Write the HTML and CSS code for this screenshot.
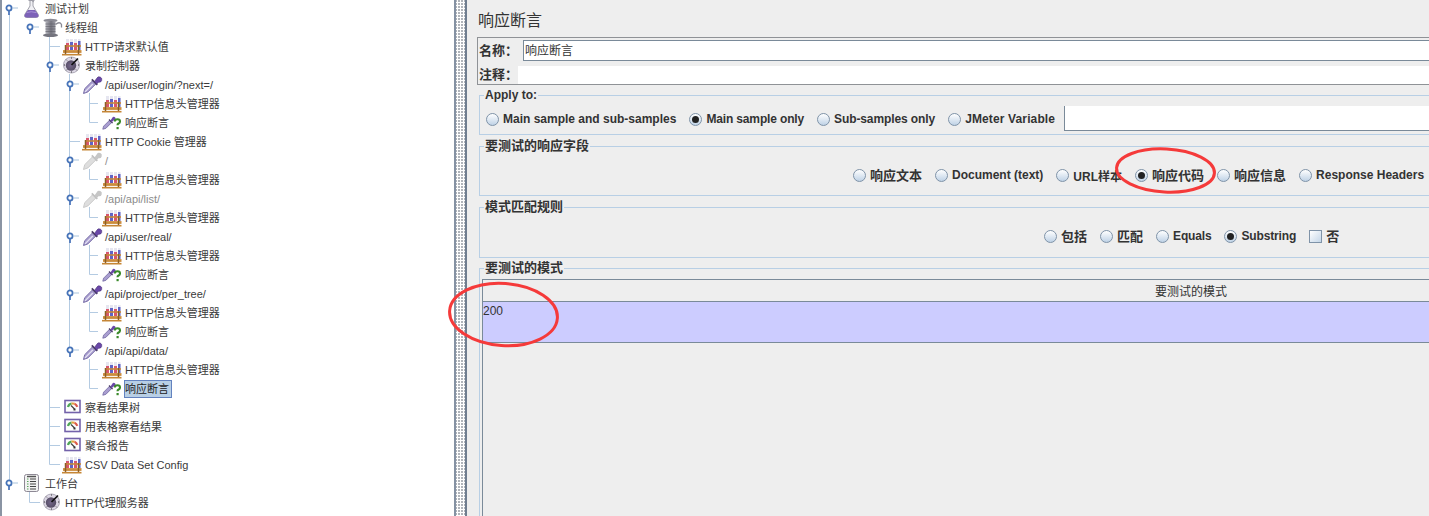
FILE: index.html
```html
<!DOCTYPE html>
<html lang="zh">
<head>
<meta charset="utf-8">
<title>响应断言</title>
<link rel="stylesheet" href="styles.css">
</head>
<body>
<svg class="defs" width="0" height="0" aria-hidden="true">
  <defs>
    <linearGradient id="glass" x1="0" y1="0" x2="1" y2="0"><stop offset="0" stop-color="#b4b4bc"/><stop offset=".55" stop-color="#74747e"/><stop offset="1" stop-color="#9a9aa4"/></linearGradient>
    <radialGradient id="face" cx=".45" cy=".5" r=".6"><stop offset="0" stop-color="#74678a"/><stop offset="1" stop-color="#50485e"/></radialGradient>
    <symbol id="flask" viewBox="0 0 22 20">
      <path d="M6.500 2.500h6M8 3v5L2.800 16.500q-.8 3 2 3h9.400q2.800 0 2-3L11 8V3" fill="#f0f0f4" stroke="#a0a0aa"/>
      <path d="M7 1l5 3" stroke="#9a9aa4"/>
      <path d="M6 12h7l3.500 5q.3 2.500-2 2.500h-10q-2.300 0-2-2.500z" fill="#7d62b8"/>
      <path d="M5 14.500q4-1.500 9 0" stroke="#a993d8" fill="none"/>
    </symbol>
    <symbol id="spool" viewBox="0 0 22 20">
      <ellipse cx="8.500" cy="3.500" rx="7" ry="1.800" fill="#8a8a94"/>
      <ellipse cx="8.500" cy="18.200" rx="7.500" ry="1.800" fill="#74747e"/>
      <rect x="3.500" y="4" width="10" height="13" fill="url(#glass)"/>
      <path d="M3.500 7h10M3.500 9.500h10M3.500 12h10M3.500 14.500h10" stroke="#5f5f68" stroke-width=".6"/>
      <path d="M13.500 7.500q4-3.500 6 0v3" fill="none" stroke="#8a8a94" stroke-width="1.300"/>
    </symbol>
    <symbol id="rack" viewBox="0 0 22 20">
      <path d="M4 3h3v11H4zM8 3h3v11H8zM12 3h3v11h-3zM16 3h2.500v11H16z" fill="#e6e6f0"/>
      <path d="M4 7h3v7H4z" fill="#d8566e"/><path d="M8 6h3v8H8z" fill="#5f64c6"/><path d="M12 7h3v7h-3z" fill="#d8566e"/><path d="M16 5h2.500v9H16z" fill="#5f64c6"/>
      <path d="M3 10h16" stroke="#c88a3a" stroke-width="1.600"/>
      <path d="M1 15.500h18.500" stroke="#cb8c3c" stroke-width="2.800"/>
      <path d="M3.500 9v10M16.500 9v10" stroke="#8a5e24" stroke-width="1.500"/>
      <path d="M0 18.700h19.500" stroke="#c58636" stroke-width="1.600"/>
    </symbol>
    <symbol id="dial" viewBox="0 0 22 20">
      <circle cx="9.500" cy="10" r="8" fill="#dcd7e4" stroke="#aeaab8"/>
      <circle cx="9" cy="10.500" r="5.200" fill="url(#face)"/>
      <path d="M9.500 10l6.500-6.500" stroke="#111" stroke-width="1.700"/>
      <path d="M9.500 2.500v1M9.500 16.500v1M2 10h1M16 10h1M4.200 4.700l.7.7M14.100 14.600l.7.7M4.200 15.300l.7-.7" stroke="#333"/>
    </symbol>
    <symbol id="pipette" viewBox="0 0 22 20">
      <path d="M1.500 19.500l1.200-4.800 8.300-8.300 3.200 3.200-8.300 8.300z" fill="#a99ed0" stroke="#7a70a8"/>
      <path d="M3 17.800l7.800-7.800" stroke="#e6e3f3" stroke-width="1.200"/>
      <path d="M9.800 5.300l5.500 5.500" stroke="#4a3c66" stroke-width="1.700"/>
      <path d="M12.500 7.500l2.300-3.300a2.700 2.700 0 1 1 1.700 4l-1.600 1.700z" fill="#6a48a8" stroke="#4a3278" stroke-width=".6"/>
    </symbol>
    <symbol id="pipette-off" viewBox="0 0 22 20">
      <path d="M1.500 19.500l1.200-4.800 8.300-8.300 3.200 3.200-8.300 8.300z" fill="#dedede" stroke="#cacaca"/>
      <path d="M9.800 5.300l5.500 5.500" stroke="#c0c0c0" stroke-width="1.700"/>
      <path d="M12.500 7.500l2.300-3.300a2.700 2.700 0 1 1 1.700 4l-1.600 1.700z" fill="#c6c6c6"/>
    </symbol>
    <symbol id="assert" viewBox="0 0 22 20">
      <path d="M.8 17.200l.8-3 6-6 2.200 2.200-6 6z" fill="#a99ed0" stroke="#7a70a8" stroke-width=".9"/>
      <path d="M7 7.500l3.600 3.600" stroke="#4a3c66" stroke-width="1.300"/>
      <path d="M8.500 8.500l1.800-2.800a1.800 1.800 0 1 1 1.200 2.700L10 10z" fill="#6a48a8"/>
      <path d="M12.800 9.500q.2-2.200 2.700-2.200t2.500 2.100q0 1.300-1.400 2.100-1.100.6-1.100 1.700" fill="none" stroke="#3b8a2a" stroke-width="2.100"/>
      <path d="M14.500 15h2.200v2.200h-2.200z" fill="#3b8a2a"/>
    </symbol>
    <symbol id="graph" viewBox="0 0 22 20">
      <rect x="3" y="3.500" width="15" height="12" fill="#fdfdfd" stroke="#7362aa" stroke-width="1.600"/>
      <path d="M6 10q.8-3 3.500-3.400" fill="none" stroke="#4fa557" stroke-width="2.200"/>
      <path d="M9.500 6.600q1.500-.3 3 .2" fill="none" stroke="#e2a13c" stroke-width="2.200"/>
      <path d="M12.500 6.800q2 .8 2.800 3" fill="none" stroke="#dc5c4c" stroke-width="2.200"/>
      <path d="M9 8.500l3.500 3.500" stroke="#444" stroke-width="1.200"/>
      <path d="M11.500 11.500h2v2h-2z" fill="#333"/>
    </symbol>
    <symbol id="board" viewBox="0 0 22 20">
      <rect x="2.500" y="1.500" width="14" height="17" rx="2" fill="#f2f2f2" stroke="#8d8894"/>
      <path d="M5 3.500h9" stroke="#555" stroke-width="1.500"/>
      <path d="M8 6h6M8 8.500h6M8 11h6M8 13.500h6M8 16h6" stroke="#444"/>
      <path d="M5 6h1.500M5 8.500h1.500M5 11h1.500M5 13.500h1.500M5 16h1.500" stroke="#5aa25a"/>
    </symbol>
    <symbol id="handle" viewBox="0 0 20 12">
      <path d="M5 8v4" stroke="#4f78bb" stroke-width="1.800"/>
      <circle cx="5" cy="5" r="2.600" fill="#fff" stroke="#4673b8" stroke-width="1.800"/>
      <path d="M8 5h6" stroke="#a9c3dc"/>
    </symbol>
  </defs>
</svg>

<div class="app">
  <div class="edge"></div>
  <nav class="tree">
    <svg class="lines" width="452" height="516" aria-hidden="true">
      <path class="line" d="M9.500 14V484M49.500 36V464.500H60M69.500 74V350M89.500 93V122.500H98M89.500 169V179.500H98M89.500 207V217.500H98M89.500 245V274.500H98M89.500 255.500H98M89.500 302V331.500H98M89.500 312.500H98M89.500 359V388.500H98M89.500 369.500H98M89.500 103.500H98M29.500 492V502.500H40M49.500 46.500H60M49.500 407.500H60M49.500 426.500H60M49.500 445.500H60M69.500 141.500H80"/>
      <use href="#handle" x="4" y="3" width="20" height="12"/>
      <use href="#handle" x="25" y="22" width="20" height="12"/>
      <use href="#handle" x="45" y="60" width="20" height="12"/>
      <use href="#handle" x="65" y="79" width="20" height="12"/>
      <use href="#handle" x="65" y="155" width="20" height="12"/>
      <use href="#handle" x="65" y="193" width="20" height="12"/>
      <use href="#handle" x="65" y="231" width="20" height="12"/>
      <use href="#handle" x="65" y="288" width="20" height="12"/>
      <use href="#handle" x="65" y="345" width="20" height="12"/>
      <use href="#handle" x="4" y="478" width="20" height="12"/>
    </svg>
    <div class="row l0"><svg class="ico"><use href="#flask"/></svg><span>测试计划</span></div>
    <div class="row l1"><svg class="ico"><use href="#spool"/></svg><span>线程组</span></div>
    <div class="row l2"><svg class="ico"><use href="#rack"/></svg><span>HTTP请求默认值</span></div>
    <div class="row l2"><svg class="ico"><use href="#dial"/></svg><span>录制控制器</span></div>
    <div class="row l3"><svg class="ico"><use href="#pipette"/></svg><span>/api/user/login/?next=/</span></div>
    <div class="row l4"><svg class="ico"><use href="#rack"/></svg><span>HTTP信息头管理器</span></div>
    <div class="row l4"><svg class="ico"><use href="#assert"/></svg><span>响应断言</span></div>
    <div class="row l3"><svg class="ico"><use href="#rack"/></svg><span>HTTP Cookie 管理器</span></div>
    <div class="row l3 off"><svg class="ico"><use href="#pipette-off"/></svg><span>/</span></div>
    <div class="row l4"><svg class="ico"><use href="#rack"/></svg><span>HTTP信息头管理器</span></div>
    <div class="row l3 off"><svg class="ico"><use href="#pipette-off"/></svg><span>/api/api/list/</span></div>
    <div class="row l4"><svg class="ico"><use href="#rack"/></svg><span>HTTP信息头管理器</span></div>
    <div class="row l3"><svg class="ico"><use href="#pipette"/></svg><span>/api/user/real/</span></div>
    <div class="row l4"><svg class="ico"><use href="#rack"/></svg><span>HTTP信息头管理器</span></div>
    <div class="row l4"><svg class="ico"><use href="#assert"/></svg><span>响应断言</span></div>
    <div class="row l3"><svg class="ico"><use href="#pipette"/></svg><span>/api/project/per_tree/</span></div>
    <div class="row l4"><svg class="ico"><use href="#rack"/></svg><span>HTTP信息头管理器</span></div>
    <div class="row l4"><svg class="ico"><use href="#assert"/></svg><span>响应断言</span></div>
    <div class="row l3"><svg class="ico"><use href="#pipette"/></svg><span>/api/api/data/</span></div>
    <div class="row l4"><svg class="ico"><use href="#rack"/></svg><span>HTTP信息头管理器</span></div>
    <div class="row l4"><svg class="ico"><use href="#assert"/></svg><span class="selected">响应断言</span></div>
    <div class="row l2"><svg class="ico"><use href="#graph"/></svg><span>察看结果树</span></div>
    <div class="row l2"><svg class="ico"><use href="#graph"/></svg><span>用表格察看结果</span></div>
    <div class="row l2"><svg class="ico"><use href="#graph"/></svg><span>聚合报告</span></div>
    <div class="row l2"><svg class="ico"><use href="#rack"/></svg><span>CSV Data Set Config</span></div>
    <div class="row l0"><svg class="ico"><use href="#board"/></svg><span>工作台</span></div>
    <div class="row l1"><svg class="ico"><use href="#dial"/></svg><span>HTTP代理服务器</span></div>
  </nav>
  <div class="divider"></div>
  <main class="main">
    <h1 class="title">响应断言</h1>
    <section class="namebox">
      <div class="name-row"><label class="lbl">名称：</label><div class="name-input">响应断言</div></div>
      <div class="comment-row"><label class="lbl">注释：</label><div class="comment-input"></div></div>
    </section>
    <fieldset class="group apply">
      <legend>Apply to:</legend>
      <div class="opts">
        <span class="opt"><i class="radio"></i>Main sample and sub-samples</span>
        <span class="opt tight"><i class="radio on"></i>Main sample only</span>
        <span class="opt snug"><i class="radio"></i>Sub-samples only</span>
        <span class="opt wide"><i class="radio"></i>JMeter Variable</span>
        <div class="var-input"></div>
      </div>
    </fieldset>
    <fieldset class="group field">
      <legend class="cjk">要测试的响应字段</legend>
      <div class="opts">
        <span class="opt cjk"><i class="radio"></i>响应文本</span>
        <span class="opt"><i class="radio"></i>Document (text)</span>
        <span class="opt"><i class="radio"></i>URL样本</span>
        <span class="opt cjk"><i class="radio on"></i>响应代码</span>
        <span class="opt cjk"><i class="radio"></i>响应信息</span>
        <span class="opt"><i class="radio"></i>Response Headers</span>
      </div>
    </fieldset>
    <fieldset class="group rule">
      <legend class="cjk">模式匹配规则</legend>
      <div class="opts">
        <span class="opt cjk"><i class="radio"></i>包括</span>
        <span class="opt cjk"><i class="radio"></i>匹配</span>
        <span class="opt tight"><i class="radio"></i>Equals</span>
        <span class="opt tight"><i class="radio on"></i>Substring</span>
        <span class="opt cjk"><i class="check"></i>否</span>
      </div>
    </fieldset>
    <fieldset class="group pattern">
      <legend class="cjk">要测试的模式</legend>
      <div class="table">
        <div class="thead">要测试的模式</div>
        <div class="tbody">200</div>
      </div>
    </fieldset>
  </main>
</div>
<svg class="marks" width="1429" height="516" aria-hidden="true">
  <ellipse cx="1165.500" cy="170.500" rx="49" ry="21.500" transform="rotate(3 1165.500 170.500)"/>
  <ellipse cx="503.500" cy="314.500" rx="54" ry="31" transform="rotate(4 503.500 314.500)"/>
</svg>
</body>
</html>
```
FILE: styles.css
```css
* { box-sizing: border-box; }
html, body { margin: 0; height: 516px; overflow: hidden; background: #fff; }
body { position: relative; width: 1429px; font-family: "Liberation Sans", "Noto Sans CJK SC", sans-serif; color: #333; }
.defs { position: absolute; }
.app { display: flex; width: 1429px; height: 516px; overflow: hidden; }
.edge { flex: none; width: 2px; background: #8a94a3; }

.tree { position: relative; flex: none; width: 452px; height: 516px; background: #fff; overflow: hidden; font-size: 11px; }
.lines { position: absolute; left: -2px; top: 0; }
.line { fill: none; stroke: #b4cbe2; stroke-width: 1; }
.row { position: relative; display: flex; align-items: center; height: 19px; white-space: nowrap; color: #3a3a3a; }
.row:first-of-type { margin-top: -1px; }
.row.off span { color: #8c8c8c; }
.l0 { padding-left: 20px; }
.l1 { padding-left: 40px; }
.l2 { padding-left: 60px; }
.l3 { padding-left: 80px; }
.l4 { padding-left: 100px; }
.ico { flex: none; width: 22px; height: 20px; margin-bottom: 2px; }
.row span { padding: 1px 2px 1px 0; border: 1px solid transparent; line-height: 14px; }
.row span.selected { background: #b8cfe5; border-color: #6382bf; color: #222; }

.divider { flex: none; width: 13px; height: 516px; border-left: 2px solid #8592a3; border-right: 2px solid #6f7d8f; background-color: #fff; background-image: radial-gradient(circle at 1px 1px, #b0b4ba .8px, transparent 1px); background-size: 3px 3px; background-position: 2px 0; }

.main { flex: none; width: 1500px; height: 516px; padding-left: 10px; background: #eeeeee; }
.title { margin: 0; height: 37px; padding: 10px 0 0 1px; font-size: 16px; line-height: 22px; font-weight: 400; color: #333; }
.namebox { width: 1500px; height: 48px; border: 1px solid #8f9296; border-right: 0; padding-top: 2px; }
.name-row { display: flex; align-items: center; height: 21px; padding-left: 1px; }
.comment-row { display: flex; align-items: center; height: 18px; margin-top: 5px; padding-left: 1px; }
.lbl { width: 39px; flex: none; font-size: 13px; line-height: 16px; font-weight: 700; color: #333; }
.name-row .lbl { width: 44px; }
.name-input { flex: 1; height: 21px; background: #fff; border-top: 1px solid #7a8a99; border-left: 1px solid #7a8a99; border-bottom: 1px solid #7a8a99; font-size: 12px; line-height: 20px; padding-left: 1px; }
.comment-input { flex: 1; height: 18px; background: #fff; }

.group { margin: 4px 0 0 2px; padding: 0; min-width: 0; width: 1500px; border: 1px solid #b8cfe5; border-right: 0; }
.group legend { margin-left: 4px; padding: 0 1px; font-size: 12px; line-height: 14px; font-weight: 700; color: #333; }
.group legend.cjk { font-size: 13px; }
.opts { display: flex; align-items: center; height: 20px; white-space: nowrap; gap: 13px; }
.opt { display: flex; align-items: center; gap: 4px; font-size: 12px; font-weight: 700; color: #333; }
.opt.cjk { font-size: 13px; padding-bottom: 2px; }
.opt.cjk .radio, .opt.cjk .check { margin-top: 2px; }
.opt.tight { letter-spacing: -.15px; }
.opt.snug { letter-spacing: -.1px; }
.opt.wide { letter-spacing: .13px; }
.radio { flex: none; width: 13px; height: 13px; border: 1px solid #7f93a8; border-radius: 50%; background: linear-gradient(#ffffff, #bfd2e6); position: relative; }
.radio.on::after { content: ""; position: absolute; left: 2px; top: 2px; width: 7px; height: 7px; border-radius: 50%; background: #222; }
.check { flex: none; width: 13px; height: 13px; border: 1px solid #7f93a8; background: linear-gradient(135deg, #ffffff, #c4d6e8); }

.apply { margin-top: 3px; padding: 6px 0; }
.apply .opts { padding-left: 6px; height: 22px; margin-bottom: -2px; }
.var-input { flex: none; width: 400px; height: 25px; margin-top: -2px; margin-left: -4px; background: #fff; border-left: 1px solid #7a8a99; border-bottom: 1px solid #7a8a99; }
.field { padding: 12px 0 10px; }
.field .opts { padding-left: 373px; }
.rule { padding: 12px 0 11px; }
.rule .opts { padding-left: 564px; }
.pattern { margin-top: 3px; height: 300px; padding: 4px 0 0 2px; }
.pattern legend.cjk { margin-left: 2px; }
.table { border-top: 1px solid #7a8a99; border-left: 1px solid #7a8a99; height: 300px; }
.thead { height: 21px; width: 1416px; text-align: center; font-size: 12px; line-height: 25px; color: #333; }
.tbody { height: 42px; width: 1500px; padding-top: 2px; background: #ccccff; border-top: 1px solid #7a8a99; border-bottom: 1px solid #7a8a99; font-size: 12px; line-height: 14px; color: #333; }

.marks { position: absolute; left: 0; top: 0; pointer-events: none; }
.marks ellipse { fill: none; stroke: #f53a3a; stroke-width: 3; }
```
